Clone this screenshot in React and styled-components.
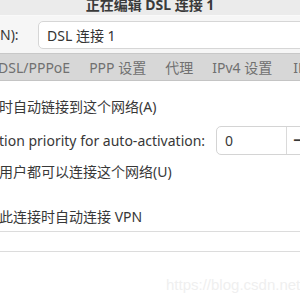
import React from 'react'
import styled, { createGlobalStyle } from 'styled-components'

const Global = createGlobalStyle`
  html, body {
    margin: 0;
    padding: 0;
    background: #ffffff;
  }
  body {
    font-family: "Noto Sans", "Noto Sans CJK SC", sans-serif;
    color: #383838;
  }
`

const Window = styled.div`
  width: 300px;
  height: 300px;
  overflow: hidden;
  position: relative;
  background: #ffffff;
`

const TitleBar = styled.div`
  height: 15px;
  background: #ebebeb;
  border-bottom: 1px solid #f9f9f9;
  display: flex;
  justify-content: center;
  overflow: hidden;
`

const Title = styled.div`
  margin-top: -5px;
  font-size: 14px;
  font-weight: 700;
  line-height: 20px;
  color: #3a3a3a;
`

const NameRow = styled.div`
  height: 37px;
  background: #f6f6f6;
  display: flex;
  align-items: center;
  border-bottom: 1px solid #c8c8c8;
`

const Label = styled.span`
  font-size: 14px;
  width: 38px;
  flex: none;
`

const Entry = styled.div`
  flex: 1;
  height: 26px;
  margin-right: -10px;
  background: #ffffff;
  border: 1px solid #d6d6d6;
  border-radius: 5px;
  display: flex;
  align-items: center;
  padding-left: 8px;
  font-size: 14px;
  color: #333;
`

const Tabs = styled.div`
  height: 26px;
  background: #d7d7d7;
  border-bottom: 1px solid #c4c4c4;
  display: flex;
  align-items: center;
  white-space: nowrap;
`

const Tab = styled.span`
  font-size: 14px;
  color: #707070;
  margin-left: ${p => p.$gap}px;
  flex: none;
`

const Content = styled.div`
  padding-top: 15px;
  display: flex;
  flex-direction: column;
`

const Line = styled.div`
  font-size: 14px;
  height: ${p => p.$h}px;
  display: flex;
  align-items: center;
  white-space: nowrap;
  margin-left: -1px;
`

const PriorityRow = styled(Line)`
  justify-content: space-between;
`

const Spin = styled.div`
  width: 100px;
  height: 27px;
  margin-right: -18px;
  border: 1px solid #d4d4d4;
  border-radius: 5px;
  display: flex;
  align-items: stretch;
  flex: none;
`

const SpinValue = styled.span`
  width: 61px;
  padding-left: 8px;
  display: flex;
  align-items: center;
  border-right: 1px solid #dadada;
`

const SpinBtn = styled.span`
  flex: 1;
  display: flex;
  align-items: center;
  padding-left: 6px;
  font-size: 16px;
  font-weight: 700;
`

const Rule = styled.div`
  height: 1px;
  background: #dcdcdc;
  margin-top: ${p => p.$top}px;
`

const Watermark = styled.div`
  position: absolute;
  left: 166px;
  top: 276px;
  font-family: "Liberation Sans", sans-serif;
  font-size: 15px;
  color: #efefef;
`

export default function App() {
  return (
    <Window>
      <Global />
      <TitleBar>
        <Title>正在编辑 DSL 连接 1</Title>
      </TitleBar>
      <NameRow>
        <Label>N):</Label>
        <Entry>DSL 连接 1</Entry>
      </NameRow>
      <Tabs>
        <Tab $gap={-2}>DSL/PPPoE</Tab>
        <Tab $gap={19}>PPP 设置</Tab>
        <Tab $gap={19}>代理</Tab>
        <Tab $gap={19}>IPv4 设置</Tab>
        <Tab $gap={21}>IPv6 设置</Tab>
      </Tabs>
      <Content>
        <Line $h={20}>时自动链接到这个网络(A)</Line>
        <PriorityRow $h={48}>
          <span>tion priority for auto-activation:</span>
          <Spin>
            <SpinValue>0</SpinValue>
            <SpinBtn>−</SpinBtn>
          </Spin>
        </PriorityRow>
        <Line $h={14}>用户都可以连接这个网络(U)</Line>
        <Line $h={76}>此连接时自动连接 VPN</Line>
        <Rule $top={-23} />
        <Rule $top={19} />
      </Content>
      <Watermark>https://blog.csdn.net</Watermark>
    </Window>
  )
}
